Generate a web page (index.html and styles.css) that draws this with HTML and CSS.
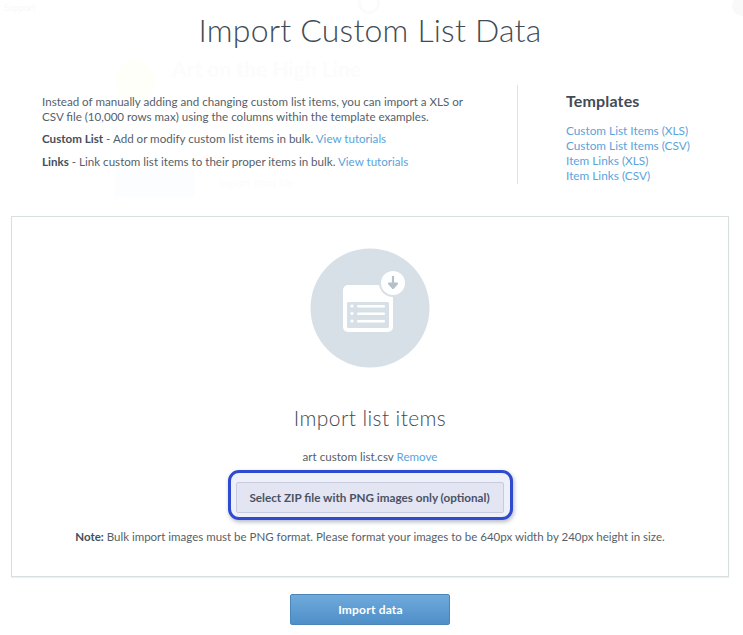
FILE: index.html
```html
<!DOCTYPE html>
<html lang="en">
<head>
<meta charset="utf-8">
<title>Import Custom List Data</title>
<link rel="stylesheet" href="styles.css">
</head>
<body>
<div class="ghost" aria-hidden="true">
  <span class="ghost-support">Support</span>
  <span class="ghost-logo"></span>
  <span class="ghost-avatar"></span>
  <span class="ghost-palette"></span>
  <span class="ghost-title">Art on the High Line</span>
  <span class="ghost-new"></span>
  <span class="ghost-import">Import from file</span>
</div>
<main class="modal">
  <h1 class="title">Import Custom List Data</h1>
  <section class="intro">
    <div class="intro-text">
      <p class="lead">Instead of manually adding and changing custom list items, you can import a XLS or CSV file (10,000 rows max) using the columns within the template examples.</p>
      <p class="line"><b>Custom List</b> - Add or modify custom list items in bulk. <a href="#">View tutorials</a></p>
      <p class="line"><b>Links</b> - Link custom list items to their proper items in bulk. <a href="#">View tutorials</a></p>
    </div>
    <aside class="templates">
      <h2>Templates</h2>
      <ul>
        <li><a href="#">Custom List Items (XLS)</a></li>
        <li><a href="#">Custom List Items (CSV)</a></li>
        <li><a href="#">Item Links (XLS)</a></li>
        <li><a href="#">Item Links (CSV)</a></li>
      </ul>
    </aside>
  </section>
  <section class="card">
    <svg class="hero" width="120" height="120" viewBox="0 0 120 120" aria-hidden="true">
      <circle cx="60" cy="60" r="59.5" fill="#d7e0e7"/>
      <rect x="33" y="37" width="50" height="47" rx="5" fill="#fff"/>
      <rect x="37" y="54" width="42" height="26" rx="1.5" fill="#d7e0e7"/>
      <circle cx="42" cy="58" r="1.600" fill="#fff"/><rect x="47" y="57" width="28" height="2.400" rx="1.200" fill="#fff"/>
      <circle cx="42" cy="65.500" r="1.600" fill="#fff"/><rect x="47" y="64.500" width="28" height="2.400" rx="1.200" fill="#fff"/>
      <circle cx="42" cy="73" r="1.600" fill="#fff"/><rect x="47" y="72" width="28" height="2.400" rx="1.200" fill="#fff"/>
      <circle cx="83" cy="35" r="14" fill="#d7e0e7"/>
      <circle cx="83" cy="35" r="12" fill="#fff"/>
      <path d="M83 28v10M79 35.500l4 4.500 4-4.500z" stroke="#b4c0ca" stroke-width="2.200" fill="#b4c0ca" stroke-linejoin="round"/>
    </svg>
    <h2 class="card-title">Import list items</h2>
    <p class="file">art custom list.csv <a href="#">Remove</a></p>
    <div class="zip-focus">
      <button class="zip" type="button">Select ZIP file with PNG images only (optional)</button>
    </div>
    <p class="note"><b>Note:</b> Bulk import images must be PNG format. Please format your images to be 640px width by 240px height in size.</p>
  </section>
  <button class="submit" type="button">Import data</button>
</main>
</body>
</html>
```
FILE: styles.css
```css
* { box-sizing: border-box; }
html, body { height: 100%; }
body {
  margin: 0;
  background: #fff;
  color: #565f6a;
  font-family: "Lato", "Liberation Sans", sans-serif;
  overflow: hidden;
  position: relative;
}
a { color: #5ba3dc; text-decoration: none; }
b { font-weight: 700; color: #454e59; }

.ghost { position: absolute; inset: 0; pointer-events: none; }
.ghost span { position: absolute; white-space: nowrap; }
.ghost-support { left: 4px; top: 2px; font-size: 9px; color: #f8f8f9; }
.ghost-logo { left: 358px; top: -8px; width: 22px; height: 22px; border-radius: 50%; border: 3px solid #fbfbfc; }
.ghost-avatar { left: 732px; top: -4px; width: 20px; height: 20px; border-radius: 50%; background: #f9f9fa; }
.ghost-palette { left: 115px; top: 61px; width: 40px; height: 40px; border-radius: 50%; background: #fffffa; }
.ghost-title { left: 172px; top: 56px; font-size: 21px; font-weight: 700; color: #fcfcfd; }
.ghost-new { left: 115px; top: 168px; width: 80px; height: 29px; background: #fcfdff; }
.ghost-import { left: 218px; top: 176px; font-size: 11px; color: #fcfcfc; }

.modal {
  position: relative;
  height: 635px;
  padding: 0 14px 0 11px;
  display: flex;
  flex-direction: column;
  align-items: center;
}
.title {
  margin: 11px 0 0;
  height: 38px;
  font-size: 32px;
  line-height: 38px;
  font-weight: 300;
  letter-spacing: 0.2px;
  color: #414b56;
}
.intro {
  align-self: stretch;
  display: flex;
  margin-top: 36px;
  height: 99px;
}
.intro-text {
  width: 507px;
  padding: 9px 0 0 31px;
  border-right: 1px solid #dfe3e6;
  font-size: 11.6px;
}
.intro-text p { margin: 0; }
.lead { width: 430px; line-height: 15px; }
.intro-text .line { line-height: 16px; margin-top: 7px; }
.templates { padding-left: 48px; }
.templates h2 {
  margin: 6px 0 0;
  font-size: 16px;
  line-height: 20px;
  font-weight: 700;
  letter-spacing: 0.15px;
  color: #414b56;
}
.templates ul { list-style: none; margin: 12px 0 0; padding: 0; }
.templates li { font-size: 11.8px; line-height: 15px; white-space: nowrap; }

.card {
  align-self: stretch;
  margin-top: 32px;
  height: 361px;
  border: 1px solid #d8dfe0;
  box-shadow: 0 1px 1px rgba(0,0,0,.06);
  display: flex;
  flex-direction: column;
  align-items: center;
  padding-top: 31px;
}
.hero { display: block; }
.card-title {
  margin: 37px 0 0;
  font-size: 21px;
  line-height: 26px;
  font-weight: 300;
  letter-spacing: 0.4px;
  color: #414b56;
}
.file { margin: 18px 0 0; font-size: 11.6px; line-height: 16px; }
.zip-focus {
  margin-top: 5px;
  width: 285px;
  height: 50px;
  padding: 9px 0 0 5px;
  border: 3px solid #2f49cf;
  border-radius: 11px;
  background: #eef0f9;
  box-shadow: 1px 2px 4px rgba(40,50,90,.35);
}
.zip {
  display: block;
  width: 268px;
  height: 31px;
  padding: 0;
  border: 1px solid #c8cbdd;
  border-radius: 2px;
  background: #e3e5f3;
  color: #4a5264;
  font: 700 11.7px/1 "Lato", "Liberation Sans", sans-serif;
}
.note { margin: 9px 0 0; font-size: 11.5px; line-height: 16px; }
.submit {
  margin-top: 17px;
  width: 160px;
  height: 31px;
  padding: 0 0 0 1px;
  border: 1px solid #4a86bb;
  border-radius: 2px;
  background: linear-gradient(#6eaadb, #4f8fc8);
  color: #fff;
  font: 700 12px/1 "Lato", "Liberation Sans", sans-serif;
  letter-spacing: 0.2px;
}
```
